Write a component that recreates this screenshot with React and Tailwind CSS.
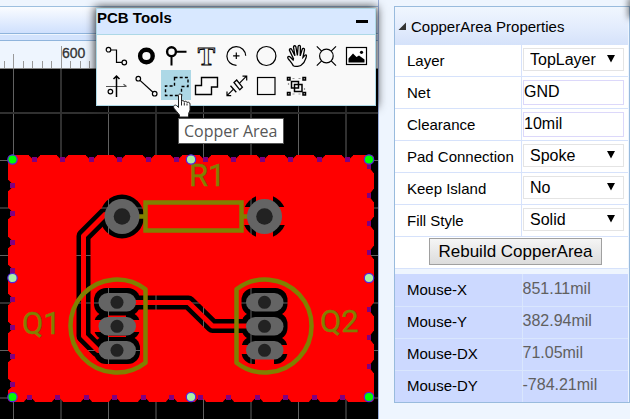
import React from "react";

const icons = [
  {
    name: "Track",
    art: (
      <>
        <circle cx="7.5" cy="9.7" r="2.3" />
        <path d="M10 10h5.5v12.3H21" />
        <circle cx="23.3" cy="22.5" r="2.3" />
      </>
    ),
  },
  { name: "Pad", art: <circle cx="15.4" cy="16" r="6.3" strokeWidth="4.4" /> },
  {
    name: "Via",
    art: (
      <>
        <circle cx="10.5" cy="11.7" r="4.4" strokeWidth="2.4" />
        <path d="M15 11.7h10.5M10.5 16v9.5" strokeWidth="2" />
      </>
    ),
  },
  {
    name: "Text",
    art: (
      <text x="15.5" y="24.5" textAnchor="middle" fontSize="26" fontWeight="bold" fontFamily="Liberation Serif, serif" strokeWidth="0.9">
        T
      </text>
    ),
  },
  { name: "Arc", art: <path d="M24.7 15.8A9.4 9.4 0 1 0 15.5 25.4M15.3 12.6v6.4M12.1 15.8h6.4" /> },
  { name: "Circle", art: <circle cx="15.4" cy="16" r="9.5" /> },
  {
    name: "Move",
    art: (
      <path
        d="M12.2 25.6C10.6 22.6 8.6 20.7 7 18.3c-1-1.6 1-2.6 2.2-1.3l2.900 3 .4-1.300-4-8.300c-.6-1.500 1.500-2.300 2.200-.9l3.200 6.300-1.400-8.700c-.2-1.600 2.100-1.900 2.400-.3l1.500 8.700.7-9c.1-1.600 2.400-1.500 2.300.1l-.2 9.300 2-6.600c.5-1.500 2.600-.9 2.300.6l-1.600 7.600c1-.8 2-3 3-2.600 1.300.5.2 2.500-.3 4-.8 3-2.300 4.700-4.300 6.200-.5.6-6.500 2.400-8 .5z"
        strokeWidth="1.3"
      />
    ),
  },
  {
    name: "Hole",
    art: (
      <>
        <circle cx="15.4" cy="16" r="6.8" />
        <path d="M5.8 6.4l4.8 4.8M25 6.4l-4.800 4.800M5.800 25.600l4.800-4.800M25 25.600l-4.800-4.800" />
      </>
    ),
  },
  {
    name: "Image",
    art: (
      <>
        <rect x="5.5" y="7.5" width="20" height="17" fill="#fff" />
        <path d="M7.500 22.500v-4l4.500-5 3.500 3.500 2.500-1.500 5.500 4v3z" fill="#000" stroke="none" />
        <circle cx="20.5" cy="12.3" r="1.6" fill="#000" stroke="none" />
      </>
    ),
  },
  {
    name: "Canvas Origin",
    art: (
      <>
        <path d="M5 16.500h20.500M22.500 14.200l3 2.300" stroke="#555" />
        <path d="M15.500 27V6M12.500 9l3-3 3 3" strokeWidth="1.500" />
        <circle cx="9.4" cy="21.6" r="2.3" />
      </>
    ),
  },
  {
    name: "Line",
    art: (
      <>
        <circle cx="7.3" cy="8.7" r="2.3" />
        <path d="M9 10.400l13 11.800" />
        <circle cx="23.7" cy="23.7" r="2.3" />
      </>
    ),
  },
  {
    name: "Copper Area",
    active: true,
    art: <path d="M13.500 7.500h13.500v9h-6.500v9h-16v-9.500h9z" strokeDasharray="3 2.200" strokeWidth="1.400" />,
  },
  { name: "Solid Region", art: <path d="M10.500 7.500h16v9.500h-6v7.500h-16v-9h6z" strokeWidth="1.400" /> },
  {
    name: "Dimension",
    art: (
      <>
        <path d="M6 25.700l6.500-6.500M18.500 13.200l7-7M6 21.500v4.200h4.200M21.500 6.200h4.200v4.200" />
        <path d="M9.500 15.700l5.800 6.600M13 12.500l2.700-2.500 5.700 7.200-2.600 2.600z" strokeWidth="1.300" />
      </>
    ),
  },
  { name: "Rect", art: <rect x="6.5" y="7.5" width="17.5" height="17" /> },
  {
    name: "Group",
    art: (
      <>
        <path d="M10.500 11.500h7v6.500h-7zM13.500 14.500h7.500v7h-7.500z" strokeWidth="1.500" />
        <path d="M6.500 7.500h2.500v2.500h-2.500zM22 7.500h2.500v2.500h-2.500zM6.500 22.500h2.500v2.500h-2.500zM22 22.500h2.500v2.500h-2.500z" strokeWidth="1.500" />
        <path d="M11.500 8.500h2M17.500 8.500h2M11.500 24h2M17.500 24h2M7.500 13v2M23.500 18v2" stroke="#999" />
      </>
    ),
  },
];

const ticks = Array.from({ length: 40 }, (_, i) => 3.5 + i * 9.5);
const brightX = [13, 108, 203, 298];
const darkX = [60, 155, 250, 345];
const brightY = [160, 255, 350];
const darkY = [112, 207, 302, 397];
const topNotches = [34, 62, 91, 119, 148, 176, 205, 233, 262, 290, 319, 347];
const bottomNotches = [29, 57, 86, 114, 143, 171, 200, 228, 257, 285, 314, 342];
const leftNotches = [186, 214, 243, 271, 300, 328, 357, 385];
const rightNotches = [166, 195, 223, 252, 309, 337, 366];
const handles = [
  [12.5, 159.5, 1], [191, 159.5, 0], [369, 159.5, 1], [12.5, 278, 0],
  [369, 278, 0], [12.5, 397, 1], [191, 397, 0], [369, 397, 1],
];
const pinRows = [302, 326, 350];
const gateTrack = "M106 213.500L83.500 236V336L98 350.500H117";
const linkTrack = "M117 302.500H188.500L212.500 326H264";

function Board() {
  return (
    <svg className="block min-h-[350px] w-full flex-1 bg-black" aria-label="Board canvas">
      <defs>
        <mask id="copper" maskUnits="userSpaceOnUse" x="0" y="150" width="380" height="260">
          <rect x="8" y="155" width="366" height="247" rx="4" fill="#fff" />
          {topNotches.map((x) => (
            <path key={x} d={`M${x - 5} 154h11v1.500l-3 3h-5l-3-3z`} fill="#000" />
          ))}
          {bottomNotches.map((x) => (
            <path key={x} d={`M${x - 5} 403h11v-1.500l-3-3h-5l-3 3z`} fill="#000" />
          ))}
          {leftNotches.map((y) => (
            <path key={y} d={`M7 ${y - 6}v11h1.500l3-3v-5l-3-3z`} fill="#000" />
          ))}
          {rightNotches.map((y) => (
            <path key={y} d={`M375 ${y - 6}v13h-1.500l-3-4v-5l3-4z`} fill="#000" />
          ))}
          <circle cx="122" cy="216.5" r="22" fill="#000" />
          <circle cx="264.5" cy="216.5" r="22" fill="#000" />
          <path d="M256 190h17v53h-17zM238 207h53v18h-53z" fill="#fff" />
          {pinRows.map((y) => (
            <g key={y} fill="#000">
              <rect x="94" y={y - 14} width="46" height="28" rx="12" />
              <rect x="241.5" y={y - 14} width="46" height="28" rx="12" />
            </g>
          ))}
          <path d="M90 320h54v12H90zM108 315.500h18v1.500h-18zM108 335.500h18v1.500h-18zM237 345h54v9h-54zM255 358h19v8h-19z" fill="#fff" />
          <g fill="none" strokeLinejoin="round">
            <path d={gateTrack} stroke="#000" strokeWidth="14" />
            <path d={linkTrack} stroke="#000" strokeWidth="14" />
            <path d={gateTrack} stroke="#fff" strokeWidth="5" />
            <path d={linkTrack} stroke="#fff" strokeWidth="5" />
          </g>
        </mask>
      </defs>
      <g transform="translate(0 -69)">
        <g shapeRendering="crispEdges">
          {brightX.map((x) => <rect key={x} x={x} y="69" width="1" height="100%" fill="#606060" />)}
          {darkX.map((x) => <rect key={x} x={x} y="69" width="2" height="100%" fill="#303030" />)}
          {brightY.map((y) => <rect key={y} x="0" y={y} width="100%" height="1" fill="#606060" />)}
          {darkY.map((y) => <rect key={y} x="0" y={y} width="100%" height="2" fill="#303030" />)}
        </g>
        <rect x="8" y="155" width="366" height="247" fill="#f00" mask="url(#copper)" />
        <g fill="#800080" shapeRendering="crispEdges">
          {topNotches.map((x) => <rect key={x} x={x - 2} y="157" width="5" height="5" />)}
          {bottomNotches.map((x) => <rect key={x} x={x - 2} y="395" width="5" height="5" />)}
          {leftNotches.map((y) => <rect key={y} x="10" y={y - 3} width="5" height="5" />)}
          {rightNotches.map((y) => <rect key={y} x="367" y={y - 2} width="4" height="5" />)}
        </g>
        <g fill="none" stroke="#808000" strokeWidth="4.5">
          <path d="M139 216.500h6M242 216.500h6" />
          <rect x="145.5" y="202.5" width="96" height="28" />
        </g>
        {[122, 264.5].map((x) => (
          <g key={x}>
            <circle cx={x} cy="216.5" r="17.5" fill="#646464" />
            <circle cx={x} cy="216.5" r="8.3" fill="#222" />
          </g>
        ))}
        {[117, 264.5].map((x) =>
          pinRows.map((y) => (
            <g key={`${x}-${y}`}>
              <rect x={x - 18.5} y={y - 9} width="37.5" height="18.5" rx="9.2" fill="#646464" />
              <circle cx={x} cy={y + 0.3} r="6.5" fill="#222" />
            </g>
          ))
        )}
        <g fill="none" stroke="#808000" strokeWidth="4.5" strokeLinejoin="round">
          <path d="M145.500 289.300A46.500 46.500 0 1 0 145.500 362.700Z" />
          <path d="M236.500 289.300A46.500 46.500 0 1 1 236.500 362.700Z" />
        </g>
        <g fill="#808000" stroke="#808000" strokeWidth="0.4" fontFamily="Roboto, sans-serif" fontSize="31">
          <text x="189" y="186">R1</text>
          <text x="22" y="334">Q1</text>
          <text x="320" y="332">Q2</text>
        </g>
        {handles.map(([x, y, corner]) => (
          <circle key={`${x}-${y}`} cx={x} cy={y} r="4.7" fill={corner ? "#00ff00" : "#a8f0a8"} stroke="#5522e0" strokeWidth="1.2" />
        ))}
      </g>
    </svg>
  );
}

function Toolbox() {
  return (
    <section className="absolute top-2 left-[96px] w-[280px] border border-[#add8e6] bg-[#f9f9f9] shadow-[0_0_9px_1px_rgba(0,0,0,0.8)]">
      <header className="flex h-[26px] items-start justify-between border-b border-[#add8e6] bg-[#d8e8ff] pr-[7px]">
        <h2 className="text-[15px] leading-[18px] font-bold">PCB Tools</h2>
        <button aria-label="Minimize" className="flex h-6 w-3 items-center justify-center">
          <span className="h-[3px] w-3 bg-black" />
        </button>
      </header>
      <div className="grid grid-cols-[repeat(9,30px)] px-1 py-[5px]">
        {icons.map((icon) => (
          <button key={icon.name} aria-label={icon.name} className={icon.active ? "size-[30px] bg-[#add8e6]" : "size-[30px]"}>
            <svg width="30" height="30" viewBox="0 0 30 30" fill="none" stroke="#000" strokeWidth="1.2">
              {icon.art}
            </svg>
          </button>
        ))}
      </div>
    </section>
  );
}

function Row({ id, label, children }) {
  return (
    <div className="flex h-8 border-b border-[#d6e2fb] bg-white">
      <label htmlFor={id} className="w-[127px] shrink-0 border-r border-[#d6e2fb] pl-3 text-[15px] leading-8">
        {label}
      </label>
      <div className="flex-1 pt-[3px] pr-1 pl-px">{children}</div>
    </div>
  );
}

function SelectRow({ id, label, value }) {
  return (
    <Row id={id} label={label}>
      <div className="relative">
        <select id={id} defaultValue={value} className="block h-[23px] w-full appearance-none border border-[#e4e4e4] bg-white pl-1.5 text-[16px] leading-5">
          <option>{value}</option>
        </select>
        <svg className="pointer-events-none absolute top-[7px] right-[9px]" width="8" height="8" viewBox="0 0 8 8">
          <path d="M0 0h8L4 7.500z" />
        </svg>
      </div>
    </Row>
  );
}

function InputRow({ id, label, value }) {
  return (
    <Row id={id} label={label}>
      <input id={id} defaultValue={value} className="block h-[25px] w-full border border-[#dcd8fa] bg-white pb-0.5 text-[16px] leading-5" />
    </Row>
  );
}

const readings = [
  ["Mouse-X", "851.11mil"],
  ["Mouse-Y", "382.94mil"],
  ["Mouse-DX", "71.05mil"],
  ["Mouse-DY", "-784.21mil"],
];

function Properties() {
  return (
    <aside className="w-[252px] shrink-0 border-l border-[#9aaedb] bg-[#eef5fe] pt-1.5 pl-[15px]">
      <div className="border border-[#99bbdd] pr-px">
        <h2 className="flex h-[38px] items-center bg-linear-to-b from-[#f0f6fe] via-[#e4edfd] to-[#d5e2fa] pt-0.5 pl-[3px] text-[15px]">
          <svg width="12" height="10" viewBox="0 0 12 10" className="mr-px">
            <path d="M8 0.500v7.500H0.500z" fill="#333" />
          </svg>
          CopperArea Properties
        </h2>
        <SelectRow id="layer" label="Layer" value="TopLayer" />
        <InputRow id="net" label="Net" value="GND" />
        <InputRow id="clearance" label="Clearance" value="10mil" />
        <SelectRow id="pad" label="Pad Connection" value="Spoke" />
        <SelectRow id="island" label="Keep Island" value="No" />
        <SelectRow id="fill" label="Fill Style" value="Solid" />
        <div className="flex h-8 justify-center border-b border-[#d6e2fb] bg-white pt-px pl-2">
          <button className="h-[27px] border border-[#a0a0a0] bg-linear-to-b from-[#f5f5f5] to-[#dcdcdc] px-2 text-[17px] leading-6">
            Rebuild CopperArea
          </button>
        </div>
        <table className="mt-[5px] w-full table-fixed border-collapse bg-[#ccd9ff]">
          <tbody>
            {readings.map(([name, value]) => (
              <tr key={name} className="h-8 border-b border-[#d9e6fd] last:border-b-0">
                <th scope="row" className="w-[127px] border-r border-[#d9e6fd] p-0 pl-3 text-left text-[15px] leading-[30px] font-normal">
                  {name}
                </th>
                <td className="p-0 pb-0.5 text-[16px] leading-6 text-[#606060]">{value}</td>
              </tr>
            ))}
          </tbody>
        </table>
      </div>
    </aside>
  );
}

export default function App() {
  return (
    <div className="relative flex min-h-screen overflow-hidden bg-[#eef5fe] font-['Liberation_Sans',Arial,sans-serif] text-black">
      <main className="relative flex min-w-0 flex-1 flex-col">
        <div className="h-[7px] border-b border-[#9dbfdf] bg-[#eef5fe]" />
        <div className="h-[27px] border-b border-[#8fb4dc] bg-linear-to-b from-[#fafcff] to-[#cfe0fd]" />
        <div className="mt-px h-[6px] border-b border-[#8fb4dc] bg-[#d3e3fd]" />
        <svg className="block h-[28px] w-full shrink-0 bg-[#eef5fe]" aria-label="Ruler">
          <g fill="#999" shapeRendering="crispEdges">
            {ticks.map((x) => <rect key={x} x={x} y="20" width="1" height="8" />)}
            <rect x="13" y="13" width="1" height="15" />
            <rect x="61" y="5" width="1" height="23" />
            <rect x="0" y="27" width="100%" height="1" fill="#888" />
          </g>
          <text x="62" y="17" fontSize="14" fill="#333" stroke="#333" strokeWidth="0.3">600</text>
        </svg>
        <Board />
        <Toolbox />
        <div role="tooltip" className="absolute top-[118px] left-[178px] border border-[#555] bg-white px-[5px] font-['Open_Sans','Noto_Sans',sans-serif] text-[16px] leading-6 whitespace-nowrap text-[#575757]">
          Copper Area
        </div>
        <svg className="absolute top-[93px] left-[172px]" width="20" height="25" viewBox="0 0 20 25">
          <path
            d="M6.500 2.500c0-2 3-2 3 0v6c.3-1.300 2.700-1.200 2.800.4.600-1.100 2.600-.8 2.700.7.800-.9 3-.4 3 1.400v5.500c0 2-1.500 3-1.500 5v2.500H7.500v-2L2.200 15.500C.5 13.200 2.800 11 4.700 12.700l1.800 1.800z"
            fill="#fff"
            stroke="#222"
            strokeWidth="1"
          />
          <path d="M9.500 8.500v4M12.300 9.500v3M15 10.500v2" stroke="#222" strokeWidth="1" />
        </svg>
      </main>
      <Properties />
      <div className="absolute top-0 -right-1 h-4 w-1 shadow-[0_0_6px_2px_rgba(0,0,0,0.5)]" />
    </div>
  );
}
